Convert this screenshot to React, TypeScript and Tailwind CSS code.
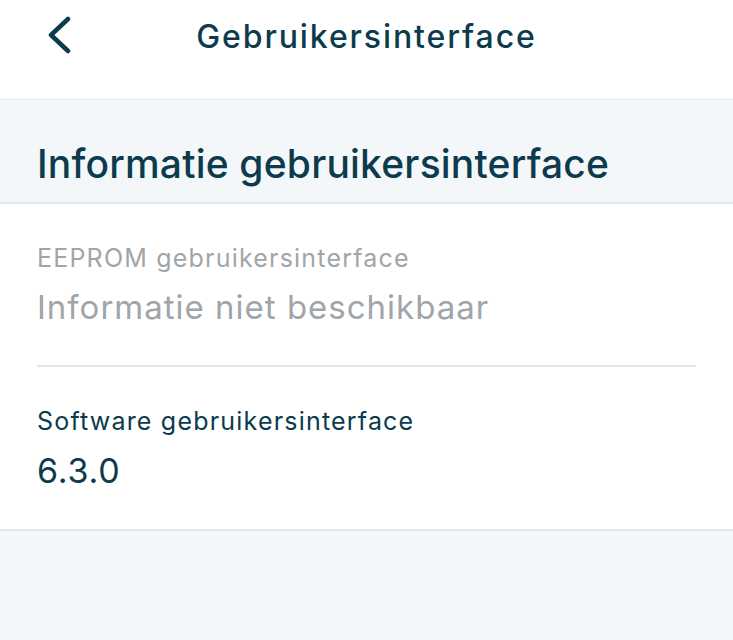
import React from "react";

export default function App() {
  return (
    <div className="w-[733px] h-[640px] bg-[#f4f7fa] text-[#0c3b4d] overflow-hidden" style={{ fontFamily: "Inter, 'Noto Sans', sans-serif" }}>
      <header className="relative h-[100px] bg-white border-b border-[#e3e6ea] flex items-start justify-center">
        <svg className="absolute left-[44px] top-[16px]" width="30" height="38" viewBox="0 0 30 38" fill="none">
          <path d="M24 3 L7 19 L24 35" stroke="#0c3b4d" strokeWidth="4.5" strokeLinecap="round" strokeLinejoin="round" />
        </svg>
        <h1 className="mt-[15px] text-[32px] leading-[44px] font-medium tracking-[1.9px]">Gebruikersinterface</h1>
      </header>
      <div className="h-[104px] border-b-2 border-[#e3e6ea] px-[37px] pt-[40px]">
        <h2 className="text-[39px] leading-[48px] font-medium tracking-[0.2px]">Informatie gebruikersinterface</h2>
      </div>
      <div className="bg-white border-b-2 border-[#e3e6ea]">
        <div className="mx-[37px] pt-[38px] pb-[38px] border-b-2 border-[#e3e6ea]">
          <div className="text-[25px] leading-[32px] tracking-[1.2px] text-[#a0a5aa]">EEPROM gebruikersinterface</div>
          <div className="mt-[13px] text-[33px] leading-[40px] tracking-[1px] text-[#a0a5aa]">Informatie niet beschikbaar</div>
        </div>
        <div className="mx-[37px] pt-[38px] pb-[38px]">
          <div className="text-[25px] leading-[32px] tracking-[1.2px]">Software gebruikersinterface</div>
          <div className="mt-[14px] text-[34px] leading-[40px] tracking-[0.8px]">6.3.0</div>
        </div>
      </div>
    </div>
  );
}
